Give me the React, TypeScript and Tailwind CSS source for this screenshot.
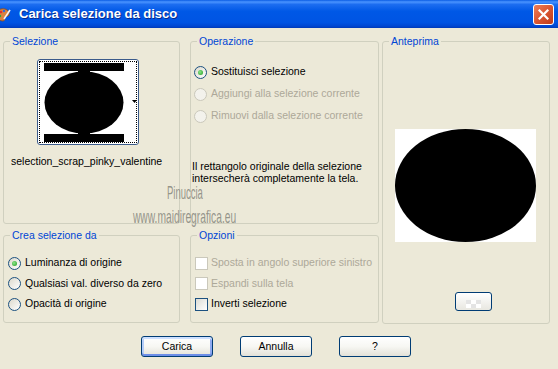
import React from 'react';
import clsx from 'clsx';

const Radio: React.FC<{ checked?: boolean; disabled?: boolean }> = ({ checked, disabled }) => (
  <span
    className={clsx(
      'w-[13px] h-[13px] rounded-full border flex items-center justify-center shrink-0',
      disabled ? 'border-[#CAC8BB] bg-[#F3F2EC]' : 'border-[#1C5180] bg-linear-to-br from-[#DCD9CC] to-white'
    )}
  >
    {checked && (
      <span className="w-[5px] h-[5px] rounded-full bg-[radial-gradient(circle_at_40%_40%,#8BE689,#1E9A1E)]" />
    )}
  </span>
);

const Check: React.FC<{ disabled?: boolean }> = ({ disabled }) => (
  <span
    className={clsx(
      'w-[13px] h-[13px] border shrink-0',
      disabled ? 'border-[#CAC8BB] bg-white' : 'border-[#1C5180] bg-linear-to-br from-[#DCDCD5] to-white'
    )}
  />
);

const Group: React.FC<{ title: string; className?: string; children?: React.ReactNode }> = ({ title, className, children }) => (
  <fieldset className={clsx('border border-[#D0D0BF] rounded-[3px] min-w-0', className)}>
    <legend className="ml-[6px] px-[2px] text-[#0046D5] leading-[13px]">{title}</legend>
    {children}
  </fieldset>
);

const XpButton: React.FC<{ label: string; primary?: boolean }> = ({ label, primary }) => (
  <button
    className={clsx(
      'w-[72px] h-[21px] rounded-[3px] border border-[#003C74] bg-linear-to-b from-white via-[#F7F7F3] to-[#E3E1D8] text-black leading-none flex items-center justify-center',
      primary &&
        'shadow-[inset_0_2px_0_#CEE0FF,inset_0_-2px_0_#6D8EE8,inset_2px_0_0_#B5CDF8,inset_-2px_0_0_#8FAAF0]'
    )}
  >
    {label}
  </button>
);

export default function App() {
  return (
    <div className="relative w-[558px] h-[369px] overflow-hidden bg-[#ECE9D8] font-['Liberation_Sans',Arial,sans-serif] text-[10.5px] text-black">
      {/* Title bar */}
      <div className="h-[28px] flex items-center bg-[linear-gradient(to_bottom,#0A5CE4_0%,#4A94FF_7%,#1C6DF0_16%,#0058E6_40%,#0054E3_80%,#0047D2_93%,#003AB8_100%)]">
        <svg width="16" height="16" viewBox="0 0 16 16" className="ml-[-5px] shrink-0">
          <path d="M2 8c0-4 4-6 8-5 3 1 5 3 4 6-1 2-3 1-4 2-1 2 1 3-2 4C4 15 2 12 2 8z" fill="#D9833F" stroke="#8A4A1A" strokeWidth="0.8" />
          <circle cx="6" cy="6" r="1.3" fill="#E03030" />
          <circle cx="9" cy="5" r="1.2" fill="#2D6BE0" />
          <circle cx="5" cy="10" r="1.2" fill="#2FA83A" />
          <path d="M9 13l6-9" stroke="#F5F5F5" strokeWidth="1.6" />
        </svg>
        <span className="ml-[8px] text-white font-bold text-[13px] [text-shadow:1px_1px_0_#0B2C8C]">
          Carica selezione da disco
        </span>
        <div className="ml-auto mr-[4px] w-[21px] h-[21px] rounded-[3px] border border-white bg-linear-to-br from-[#EE7E58] via-[#DA5632] to-[#BE3A18] flex items-center justify-center">
          <svg width="11" height="11" viewBox="0 0 11 11">
            <path d="M1.5 1.5l8 8M9.5 1.5l-8 8" stroke="white" strokeWidth="2.2" strokeLinecap="square" />
          </svg>
        </div>
      </div>

      {/* Body */}
      <div className="pt-[7px] pl-[3px] flex flex-col">
        <div className="flex">
          <div className="grid grid-cols-[177px_189px] grid-rows-[189px_94px] gap-x-[10px] gap-y-[5px]">
            <Group title="Selezione">
              <div className="flex flex-col">
                <div className="relative mt-[11px] ml-[33px] w-[102px] h-[86px] rounded-[3px] border border-[#3B5B8A] bg-white p-px">
                  <div className="h-[82px] border border-dotted border-black pt-px pl-[4px]">
                    <svg width="80" height="79" viewBox="0 0 80 79">
                      <rect x="0" y="0" width="80" height="8" fill="#000" />
                      <rect x="0" y="71" width="80" height="8" fill="#000" />
                      <rect x="34" y="6" width="12" height="6" fill="#000" />
                      <rect x="34" y="67" width="12" height="6" fill="#000" />
                      <ellipse cx="40" cy="39.5" rx="39.5" ry="31" fill="#000" />
                    </svg>
                  </div>
                  <svg width="5" height="3" viewBox="0 0 5 3" className="absolute left-[94px] top-[40px]">
                    <path d="M0 0h5L2.5 3z" fill="#000" />
                  </svg>
                </div>
                <div className="mt-[10px] ml-[7px] w-[152px] overflow-hidden whitespace-nowrap leading-[13px]">
                  selection_scrap_pinky_valentine
                </div>
              </div>
            </Group>

            <Group title="Operazione">
              <div className="flex flex-col pl-[3px] mt-[13px]">
                <label className="h-[22px] flex items-center gap-[4px]">
                  <Radio checked />
                  <span>Sostituisci selezione</span>
                </label>
                <label className="h-[22px] flex items-center gap-[4px] text-[#ACA899]">
                  <Radio disabled />
                  <span>Aggiungi alla selezione corrente</span>
                </label>
                <label className="h-[22px] flex items-center gap-[4px] text-[#ACA899]">
                  <Radio disabled />
                  <span>Rimuovi dalla selezione corrente</span>
                </label>
              </div>
              <p className="mt-[33px] ml-px leading-[12px]">
                Il rettangolo originale della selezione
                <br />
                intersecherà completamente la tela.
              </p>
            </Group>

            <Group title="Crea selezione da">
              <div className="flex flex-col pl-[4px] mt-[11px]">
                <label className="h-[20.5px] flex items-center gap-[4px]">
                  <Radio checked />
                  <span>Luminanza di origine</span>
                </label>
                <label className="h-[20.5px] flex items-center gap-[4px]">
                  <Radio />
                  <span>Qualsiasi val. diverso da zero</span>
                </label>
                <label className="h-[20.5px] flex items-center gap-[4px]">
                  <Radio />
                  <span>Opacità di origine</span>
                </label>
              </div>
            </Group>

            <Group title="Opzioni">
              <div className="flex flex-col pl-[4px] mt-[11px]">
                <label className="h-[20.5px] flex items-center gap-[3px] text-[#ACA899]">
                  <Check disabled />
                  <span>Sposta in angolo superiore sinistro</span>
                </label>
                <label className="h-[20.5px] flex items-center gap-[3px] text-[#ACA899]">
                  <Check disabled />
                  <span>Espandi sulla tela</span>
                </label>
                <label className="h-[20.5px] flex items-center gap-[3px]">
                  <Check />
                  <span>Inverti selezione</span>
                </label>
              </div>
            </Group>
          </div>

          <Group title="Anteprima" className="ml-[3px] w-[168px] h-[289px]">
            <div className="flex flex-col">
              <div className="mt-[81px] ml-[12px] w-[141px] h-[113px] bg-white">
                <svg width="141" height="113" viewBox="0 0 141 113">
                  <ellipse cx="70.5" cy="56.5" rx="70.5" ry="56.5" fill="#000" />
                </svg>
              </div>
              <div className="mt-[50px] ml-[72px] w-[37px] h-[19px] rounded-[3px] border border-[#003C74] bg-linear-to-b from-white to-[#E8E7E0] flex items-end justify-center pb-[2px]">
                <div className="grid grid-cols-[5px_5px_5px] grid-rows-[4px_4px]">
                  <span className="bg-[#E4E4E4]" />
                  <span className="bg-white" />
                  <span className="bg-[#E4E4E4]" />
                  <span className="bg-white" />
                  <span className="bg-[#E4E4E4]" />
                  <span className="bg-white" />
                </div>
              </div>
            </div>
          </Group>
        </div>

        {/* Buttons */}
        <div className="mt-[12px] pl-[138px] flex gap-[27px]">
          <XpButton label="Carica" primary />
          <XpButton label="Annulla" />
          <XpButton label="?" />
        </div>
      </div>

      {/* Watermark */}
      <div className="absolute left-[120px] top-[181px] w-[130px] flex flex-col items-center text-[#85857B]/85 text-[19px] leading-[24px] pointer-events-none">
        <span className="scale-x-[0.5]">Pinuccia</span>
        <span className="scale-x-[0.54] whitespace-nowrap">www.maidiregrafica.eu</span>
      </div>
    </div>
  );
}
